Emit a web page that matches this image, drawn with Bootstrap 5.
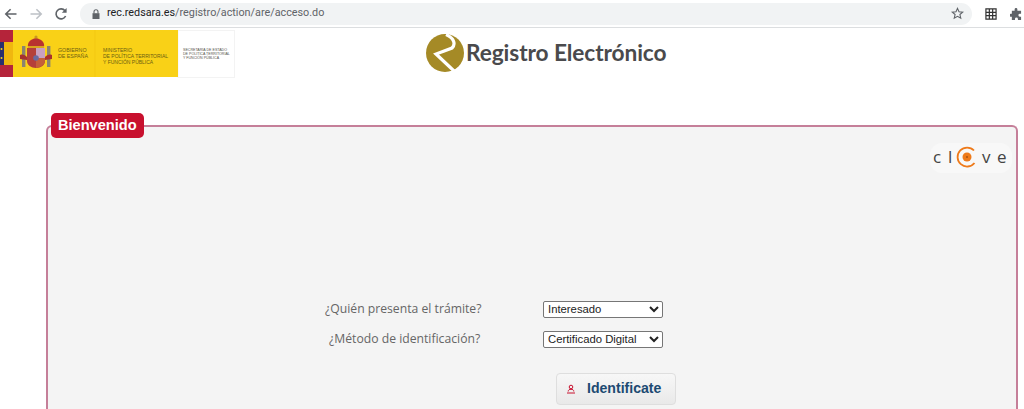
<!DOCTYPE html>
<html lang="es">
<head>
  <meta charset="UTF-8" />
  <meta name="viewport" content="width=device-width, initial-scale=1.0"/>
  <title>Registro Electrónico</title>
  <link href="https://cdn.jsdelivr.net/npm/bootstrap@5.3.3/dist/css/bootstrap.min.css" rel="stylesheet" />
  <style>
    html, body { height: 409px; overflow: hidden; background: #fff; }
    body { font-family: "Liberation Sans", Arial, sans-serif; }

    .chrome-bar { height: 28px; border-bottom: 1px solid #dcdee0; background: #fff; padding-left: 4px; gap: 11px; }
    .chrome-btn { width: 14px; height: 14px; flex: none; }
    .omnibox { height: 22px; width: 892px; margin-left: 1px; border-radius: 11px; background: #f1f3f4; font-family: "Roboto", sans-serif; font-size: 10.8px; color: #5f6368; padding: 0 8px 0 12px; }
    .omnibox b { font-weight: 400; color: #202124; }
    .omni-text { margin-left: 7px; }
    .top-tools { gap: 13px; margin-left: 2px; }

    .site-head { height: 50px; }
    .gob-logo { width: 235px; height: 50px; flex: none; }
    .reg-brand { margin-left: 191px; margin-top: 6px; }
    .reg-title { font-family: "Lato", sans-serif; font-weight: 700; font-size: 22.7px; color: #4a4a4c; margin-left: 2px; letter-spacing: -.1px; }

    .welcome-wrap { margin: 47px 6px 0 46px; }
    .welcome-box { height: 284px; border: 2px solid #c57f99; border-bottom: 0; border-radius: 6px 6px 0 0; background: #f4f4f4; position: relative; }
    .welcome-tag { position: absolute; top: -14px; left: 3px; height: 25px; padding: 0 7px; background: #c8102e; color: #fff; font-weight: 700; font-size: 14.6px; line-height: 25px; border-radius: 5px; }
    .clave-logo { position: absolute; top: 12px; right: 0; width: 92px; height: 38px; }

    .form-area { padding-top: 167px; }
    .q-row { height: 30px; }
    .q-label { width: 495px; font-family: "Open Sans", sans-serif; font-size: 12.2px; color: #666; flex: none; }
    .q-who { padding-left: 277px; }
    .q-how { padding-left: 281px; }
    .q-select { width: 120px; height: 17px; font-family: "Liberation Sans", sans-serif; font-size: 11.3px; color: #222; background: #fff; border: 1px solid #767676; border-radius: 2px; padding: 0; }
    .id-btn { width: 120px; height: 32px; margin: 19px 0 0 508px; padding: 0 0 0 9px; background: linear-gradient(#f7f7f7, #e9e9e9); border: 1px solid #dedede; border-radius: 4px; font-weight: 700; font-size: 14.1px; color: #1d4a72; }
    .id-btn svg { margin-right: 11px; }
  </style>
</head>
<body>
  <div class="chrome-bar d-flex align-items-center">
    <svg class="chrome-btn" viewBox="0 0 14 14" fill="none" stroke="#5f6368" stroke-width="1.6"><path d="M12.5 7H2M6.6 2.2 1.8 7l4.8 4.8"/></svg>
    <svg class="chrome-btn" viewBox="0 0 14 14" fill="none" stroke="#bdc1c6" stroke-width="1.6"><path d="M1.5 7H12M7.4 2.2 12.2 7l-4.8 4.8"/></svg>
    <svg class="chrome-btn" viewBox="0 0 14 14" fill="none" stroke="#5f6368" stroke-width="1.6"><path d="M11.6 9A5 5 0 1 1 11 3.8"/><path d="M12.6 1v4.8H7.8z" fill="#5f6368" stroke="none"/></svg>
    <div class="omnibox d-flex align-items-center">
      <svg width="8" height="10" viewBox="0 0 8 10"><path d="M.5 4.2h7V10h-7z" fill="#5f6368"/><path d="M2 4.5V2.8a2 2 0 0 1 4 0v1.7" fill="none" stroke="#5f6368" stroke-width="1.1"/></svg>
      <span class="omni-text"><b>rec.redsara.es</b>/registro/action/are/acceso.do</span>
      <svg class="ms-auto" width="13" height="13" viewBox="0 0 14 14" fill="none" stroke="#5f6368" stroke-width="1.2"><path d="M7 1.5 8.6 5.2l4 .3-3 2.6.9 3.9L7 10l-3.5 2 .9-3.9-3-2.6 4-.3z"/></svg>
    </div>
    <div class="top-tools d-flex align-items-center">
      <svg width="12" height="12" viewBox="0 0 13 13" fill="none" stroke="#333" stroke-width="1.3"><path d="M1 1h11v11H1zM1 4.7h11M1 8.3h11M4.7 1v11M8.3 1v11"/></svg>
      <svg width="12" height="12" viewBox="0 0 13 13" fill="#5f6368"><path d="M5 1.5a1.5 1.5 0 0 1 3 0V3h4v3.2h-1.3a1.6 1.6 0 0 0 0 3.2H12V13H8.6v-1.1a1.6 1.6 0 0 0-3.2 0V13H2V9.4H.9a1.6 1.6 0 0 1 0-3.2H2V3h3z"/></svg>
    </div>
  </div>

  <div class="site-head d-flex align-items-start">
    <svg class="gob-logo" viewBox="0 0 235 50">
      <rect x="178" y="2.5" width="56.5" height="47" fill="#fff" stroke="#f3f3f3"/>
      <rect x="13" y="2" width="165" height="47" fill="#f9d117"/>
      <rect x="0" y="2" width="13" height="47" fill="#f0b70f"/>
      <rect x="0" y="2" width="13" height="12" fill="#b5243a"/>
      <rect x="0" y="37" width="13" height="12" fill="#b5243a"/>
      <rect x="0" y="14" width="4" height="23" fill="#2a2f6e"/>
      <circle cx="1.5" cy="21" r="1" fill="#f9d117"/><circle cx="1.5" cy="30" r="1" fill="#f9d117"/>
      <!-- crown -->
      <path d="M28 19c-1-5 3-8 8-9 5 1 9 4 8 9z" fill="#b8332f"/>
      <circle cx="36" cy="9" r="1.6" fill="#c9971f"/>
      <path d="M28 18h16v2H28z" fill="#d8a51f"/>
      <!-- shield -->
      <path d="M27 20h18v13c0 4-4 7-9 7s-9-3-9-7z" fill="#b5403a"/>
      <path d="M36 20h9v10h-9z" fill="#c9a0c0"/>
      <path d="M36 30h9v3c0 3-4 6-9 7z" fill="#c5603a"/>
      <circle cx="36" cy="30" r="2.8" fill="#6a6aa0"/>
      <!-- columns -->
      <rect x="22" y="18" width="3.4" height="21" fill="#8a8470"/>
      <rect x="47" y="18" width="3.4" height="21" fill="#8a8470"/>
      <path d="M20 27c3-1 5 0 7 2v3l-7-1zM52 27c-3-1-5 0-7 2v3l7-1z" fill="#a8322d"/>
      <text x="58" y="24" font-size="5.3" fill="#6b5e12" font-family="Liberation Sans">GOBIERNO</text>
      <text x="58" y="30" font-size="5.3" fill="#6b5e12" font-family="Liberation Sans">DE ESPAÑA</text>
      <line x1="95" y1="2" x2="95" y2="49" stroke="#f0c40f" stroke-width=".7"/>
      <text x="103" y="24" font-size="5" fill="#6b5e12" font-family="Liberation Sans">MINISTERIO</text>
      <text x="103" y="30" font-size="5" fill="#6b5e12" font-family="Liberation Sans">DE POLÍTICA TERRITORIAL</text>
      <text x="103" y="36" font-size="5" fill="#6b5e12" font-family="Liberation Sans">Y FUNCIÓN PÚBLICA</text>
      <text x="183" y="23" font-size="3.6" fill="#55524a" font-family="Liberation Sans">SECRETARÍA DE ESTADO</text>
      <text x="183" y="27" font-size="3.6" fill="#55524a" font-family="Liberation Sans">DE POLÍTICA TERRITORIAL</text>
      <text x="183" y="31" font-size="3.6" fill="#55524a" font-family="Liberation Sans">Y FUNCIÓN PÚBLICA</text>
    </svg>
    <div class="reg-brand d-flex align-items-center">
      <svg width="38" height="38" viewBox="0 0 38 38">
        <circle cx="19" cy="19" r="19" fill="#a58a26"/>
        <path d="M20 .5C28 4 30 10 26 14L10 20 28 37" fill="none" stroke="#fff" stroke-width="3.2"/>
      </svg>
      <span class="reg-title">Registro Electrónico</span>
    </div>
  </div>

  <div class="welcome-wrap">
    <div class="welcome-box">
      <div class="welcome-tag">Bienvenido</div>
      <svg class="clave-logo" viewBox="0 0 92 38">
        <rect x="6" y="4" width="82" height="30" rx="12" fill="#f8f8f8"/>
        <text x="9" y="24" font-size="17" fill="#444" font-family="Open Sans">c</text>
        <text x="24" y="24" font-size="17" fill="#444" font-family="Open Sans">l</text>
        <circle cx="43" cy="18" r="4.5" fill="#ee7a1a"/>
        <circle cx="43" cy="18" r="1" fill="#a8500f"/>
        <path d="M50 11.5A9.5 9.5 0 1 0 50.5 24" fill="none" stroke="#ee7a1a" stroke-width="1.8"/>
        <text x="58" y="24" font-size="17" fill="#444" font-family="Open Sans">v</text>
        <text x="73" y="24" font-size="17" fill="#444" font-family="Open Sans">e</text>
      </svg>
      <div class="form-area">
        <div class="q-row d-flex align-items-center">
          <div class="q-label q-who">¿Quién presenta el trámite?</div>
          <select class="q-select"><option>Interesado</option></select>
        </div>
        <div class="q-row d-flex align-items-center">
          <div class="q-label q-how">¿Método de identificación?</div>
          <select class="q-select"><option>Certificado Digital</option></select>
        </div>
        <button type="button" class="id-btn d-flex align-items-center justify-content-start">
          <svg width="10" height="10" viewBox="0 0 10 10" fill="none" stroke="#c8102e" stroke-width="1"><circle cx="5" cy="3" r="1.8"/><path d="M2.2 7.5c0-1.7 1.3-2.2 2.8-2.2s2.8.5 2.8 2.2"/><path d="M1 9h8"/></svg>
          Identificate
        </button>
      </div>
    </div>
  </div>
</body>
</html>
